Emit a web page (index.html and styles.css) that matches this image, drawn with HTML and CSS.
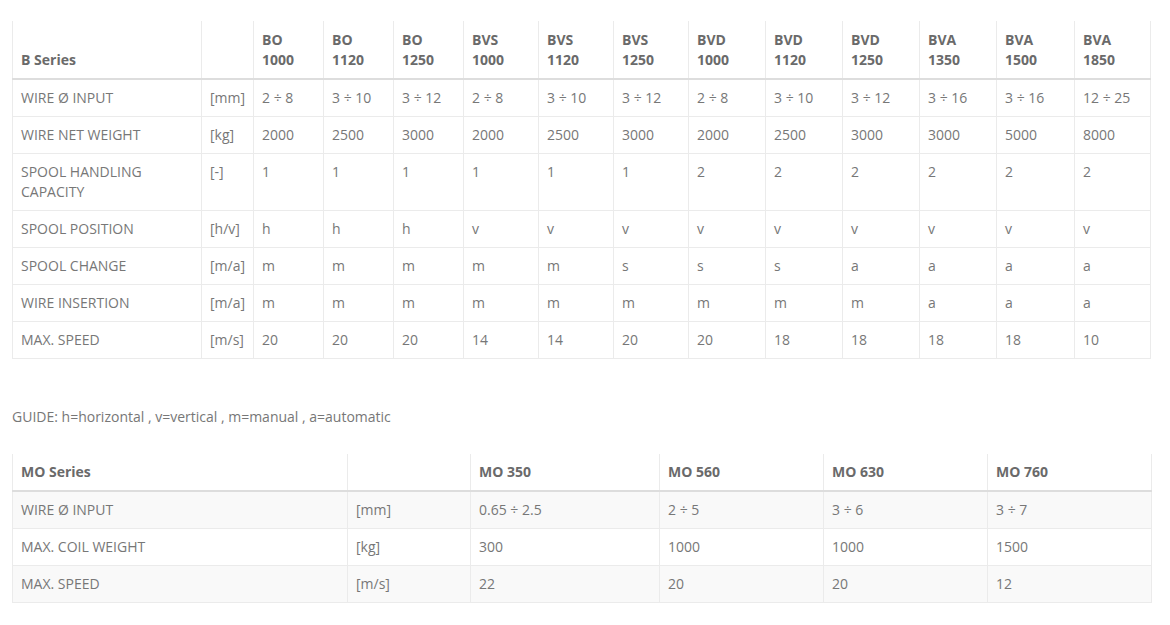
FILE: index.html
```html
<!DOCTYPE html>
<html lang="en">
<head>
<meta charset="utf-8">
<title>Series tables</title>
<link rel="stylesheet" href="styles.css">
</head>
<body>
<div class="page">
  <table class="spec spec-b">
    <colgroup>
      <col class="c-label"><col class="c-unit">
      <col class="c-70"><col class="c-70"><col class="c-70">
      <col class="c-75"><col class="c-75"><col class="c-75">
      <col class="c-77"><col class="c-77"><col class="c-77"><col class="c-77"><col class="c-78">
    </colgroup>
    <thead>
      <tr>
        <th>B Series</th><th></th>
        <th>BO<br>1000</th><th>BO<br>1120</th><th>BO<br>1250</th>
        <th>BVS<br>1000</th><th>BVS<br>1120</th><th>BVS<br>1250</th>
        <th>BVD<br>1000</th><th>BVD<br>1120</th><th>BVD<br>1250</th>
        <th>BVA<br>1350</th><th>BVA<br>1500</th><th>BVA<br>1850</th>
      </tr>
    </thead>
    <tbody>
      <tr><td>WIRE Ø INPUT</td><td>[mm]</td><td>2 ÷ 8</td><td>3 ÷ 10</td><td>3 ÷ 12</td><td>2 ÷ 8</td><td>3 ÷ 10</td><td>3 ÷ 12</td><td>2 ÷ 8</td><td>3 ÷ 10</td><td>3 ÷ 12</td><td>3 ÷ 16</td><td>3 ÷ 16</td><td>12 ÷ 25</td></tr>
      <tr><td>WIRE NET WEIGHT</td><td>[kg]</td><td>2000</td><td>2500</td><td>3000</td><td>2000</td><td>2500</td><td>3000</td><td>2000</td><td>2500</td><td>3000</td><td>3000</td><td>5000</td><td>8000</td></tr>
      <tr><td>SPOOL HANDLING<br>CAPACITY</td><td>[-]</td><td>1</td><td>1</td><td>1</td><td>1</td><td>1</td><td>1</td><td>2</td><td>2</td><td>2</td><td>2</td><td>2</td><td>2</td></tr>
      <tr><td>SPOOL POSITION</td><td>[h/v]</td><td>h</td><td>h</td><td>h</td><td>v</td><td>v</td><td>v</td><td>v</td><td>v</td><td>v</td><td>v</td><td>v</td><td>v</td></tr>
      <tr><td>SPOOL CHANGE</td><td>[m/a]</td><td>m</td><td>m</td><td>m</td><td>m</td><td>m</td><td>s</td><td>s</td><td>s</td><td>a</td><td>a</td><td>a</td><td>a</td></tr>
      <tr><td>WIRE INSERTION</td><td>[m/a]</td><td>m</td><td>m</td><td>m</td><td>m</td><td>m</td><td>m</td><td>m</td><td>m</td><td>m</td><td>a</td><td>a</td><td>a</td></tr>
      <tr><td>MAX. SPEED</td><td>[m/s]</td><td>20</td><td>20</td><td>20</td><td>14</td><td>14</td><td>20</td><td>20</td><td>18</td><td>18</td><td>18</td><td>18</td><td>10</td></tr>
    </tbody>
  </table>

  <p class="guide">GUIDE: h=horizontal , v=vertical , m=manual , a=automatic</p>

  <table class="spec spec-mo striped">
    <colgroup>
      <col class="m-label"><col class="m-unit"><col class="m-first">
      <col class="m-col"><col class="m-col"><col class="m-col">
    </colgroup>
    <thead>
      <tr><th>MO Series</th><th></th><th>MO 350</th><th>MO 560</th><th>MO 630</th><th>MO 760</th></tr>
    </thead>
    <tbody>
      <tr><td>WIRE Ø INPUT</td><td>[mm]</td><td>0.65 ÷ 2.5</td><td>2 ÷ 5</td><td>3 ÷ 6</td><td>3 ÷ 7</td></tr>
      <tr><td>MAX. COIL WEIGHT</td><td>[kg]</td><td>300</td><td>1000</td><td>1000</td><td>1500</td></tr>
      <tr><td>MAX. SPEED</td><td>[m/s]</td><td>22</td><td>20</td><td>20</td><td>12</td></tr>
    </tbody>
  </table>
</div>
</body>
</html>
```

FILE: styles.css
```css
html, body {
  margin: 0;
  padding: 0;
  background: #fff;
}

body {
  font-family: "Open Sans", "Liberation Sans", Arial, sans-serif;
  font-size: 14px;
  line-height: 20px;
  color: #777;
}

.page {
  padding: 21px 0 0 12px;
}

.spec {
  width: 1139px;
  border-collapse: collapse;
  table-layout: fixed;
  border-left: 1px solid #ebebeb;
  border-right: 1px solid #ebebeb;
}

.spec th,
.spec td {
  padding: 8px 8px;
  text-align: left;
  border: 1px solid #ebebeb;
  white-space: nowrap;
}

.spec th {
  font-weight: 700;
  color: #6a6a6a;
  vertical-align: bottom;
  border-top: 0;
  border-bottom: 2px solid #ddd;
  padding-top: 9px;
  padding-bottom: 8px;
}

.spec td {
  vertical-align: top;
}

.spec-b col.c-label { width: 189px; }
.spec-b col.c-unit { width: 52px; }
.spec-b col.c-70 { width: 70px; }
.spec-b col.c-75 { width: 75px; }
.spec-b col.c-77 { width: 77px; }
.spec-b col.c-78 { width: 78px; }

.spec-b td:nth-child(2) {
  padding-left: 8px;
  padding-right: 2px;
}

.guide {
  margin: 48px 0 27px 0;
  line-height: 20px;
}

.spec-mo col.m-label { width: 335px; }
.spec-mo col.m-unit { width: 123px; }
.spec-mo col.m-first { width: 189px; }
.spec-mo col.m-col { width: 164px; }

.spec-mo th {
  padding-top: 8px;
  padding-bottom: 8px;
}

.striped tbody tr:nth-child(odd) td {
  background: #f9f9f9;
}
```
